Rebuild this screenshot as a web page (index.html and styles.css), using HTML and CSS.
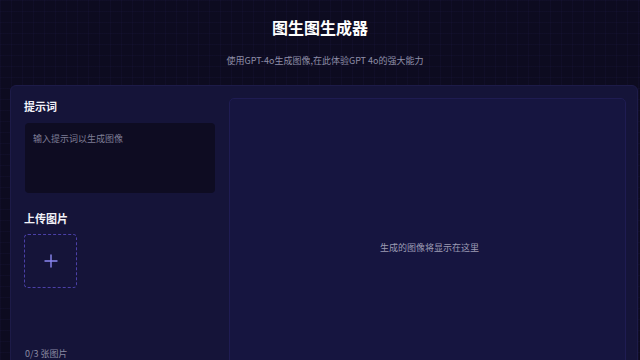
FILE: index.html
```html
<!DOCTYPE html>
<html lang="zh-CN">
<head>
<meta charset="utf-8">
<title>图生图生成器</title>
<link rel="stylesheet" href="styles.css">
</head>
<body>
<header class="hero">
  <h1 class="title">图生图生成器</h1>
  <p class="subtitle">使用GPT-4o生成图像,在此体验GPT 4o的强大能力</p>
</header>
<main class="card">
  <section class="controls">
    <h2 class="label">提示词</h2>
    <div class="prompt">输入提示词以生成图像</div>
    <h2 class="label label-upload">上传图片</h2>
    <div class="upload">
      <svg width="14" height="14" viewBox="0 0 14 14" fill="none" stroke="#8c88f2" stroke-width="1.4" stroke-linecap="round"><path d="M7 1v12M1 7h12"/></svg>
    </div>
    <p class="count">0/3 张图片</p>
  </section>
  <section class="result">
    <p class="placeholder">生成的图像将显示在这里</p>
  </section>
</main>
</body>
</html>
```

FILE: styles.css
```css
* { box-sizing: border-box; }
html, body {
  margin: 0;
  padding: 0;
  height: 100%;
  overflow: hidden;
}
body {
  font-family: "Noto Sans CJK SC", "Noto Sans", sans-serif;
  color: #fff;
  background-color: #0d0b20;
  background-image:
    linear-gradient(rgba(90, 80, 190, 0.05) 1px, transparent 1px),
    linear-gradient(90deg, rgba(90, 80, 190, 0.05) 1px, transparent 1px);
  background-size: 11px 11px;
}
.hero {
  text-align: center;
  padding-top: 17px;
}
.title {
  margin: 0;
  font-size: 16px;
  line-height: 20px;
  font-weight: 700;
  color: #fff;
}
.subtitle {
  margin: 18px 0 0 10px;
  font-size: 9px;
  line-height: 12px;
  color: #8f8ea8;
}
.card {
  margin: 18px 2px 0 10px;
  height: 300px;
  background: rgba(22, 21, 58, 0.97);
  border: 1px solid #1d1b48;
  border-radius: 6px;
  padding: 12px 11px 0 13px;
  display: grid;
  grid-template-columns: 191px 1fr;
  column-gap: 14px;
}
.controls {
  display: flex;
  flex-direction: column;
  align-items: flex-start;
}
.label {
  margin: 0;
  font-size: 11px;
  line-height: 16px;
  font-weight: 700;
  color: #f2f2f8;
}
.prompt {
  margin-top: 9px;
  width: 190px;
  height: 70px;
  margin-left: 1px;
  background: #0e0c22;
  border-radius: 4px;
  padding: 10px 8px;
  font-size: 9px;
  line-height: 12px;
  color: #7f7e96;
}
.label-upload {
  margin-top: 17px;
}
.upload {
  margin-top: 8px;
  width: 53px;
  height: 54px;
  border: 1px dashed #4b40a8;
  border-radius: 4px;
  display: flex;
  align-items: center;
  justify-content: center;
}
.count {
  margin: 60px 0 0 1px;
  font-size: 9px;
  line-height: 12px;
  color: #8a89a2;
}
.result {
  background: #161540;
  border: 1px solid #1f1c52;
  border-radius: 5px;
  display: flex;
  justify-content: center;
  padding-top: 143px;
  padding-left: 4px;
}
.placeholder {
  margin: 0;
  font-size: 9px;
  line-height: 12px;
  color: #9d9cb4;
}
```
